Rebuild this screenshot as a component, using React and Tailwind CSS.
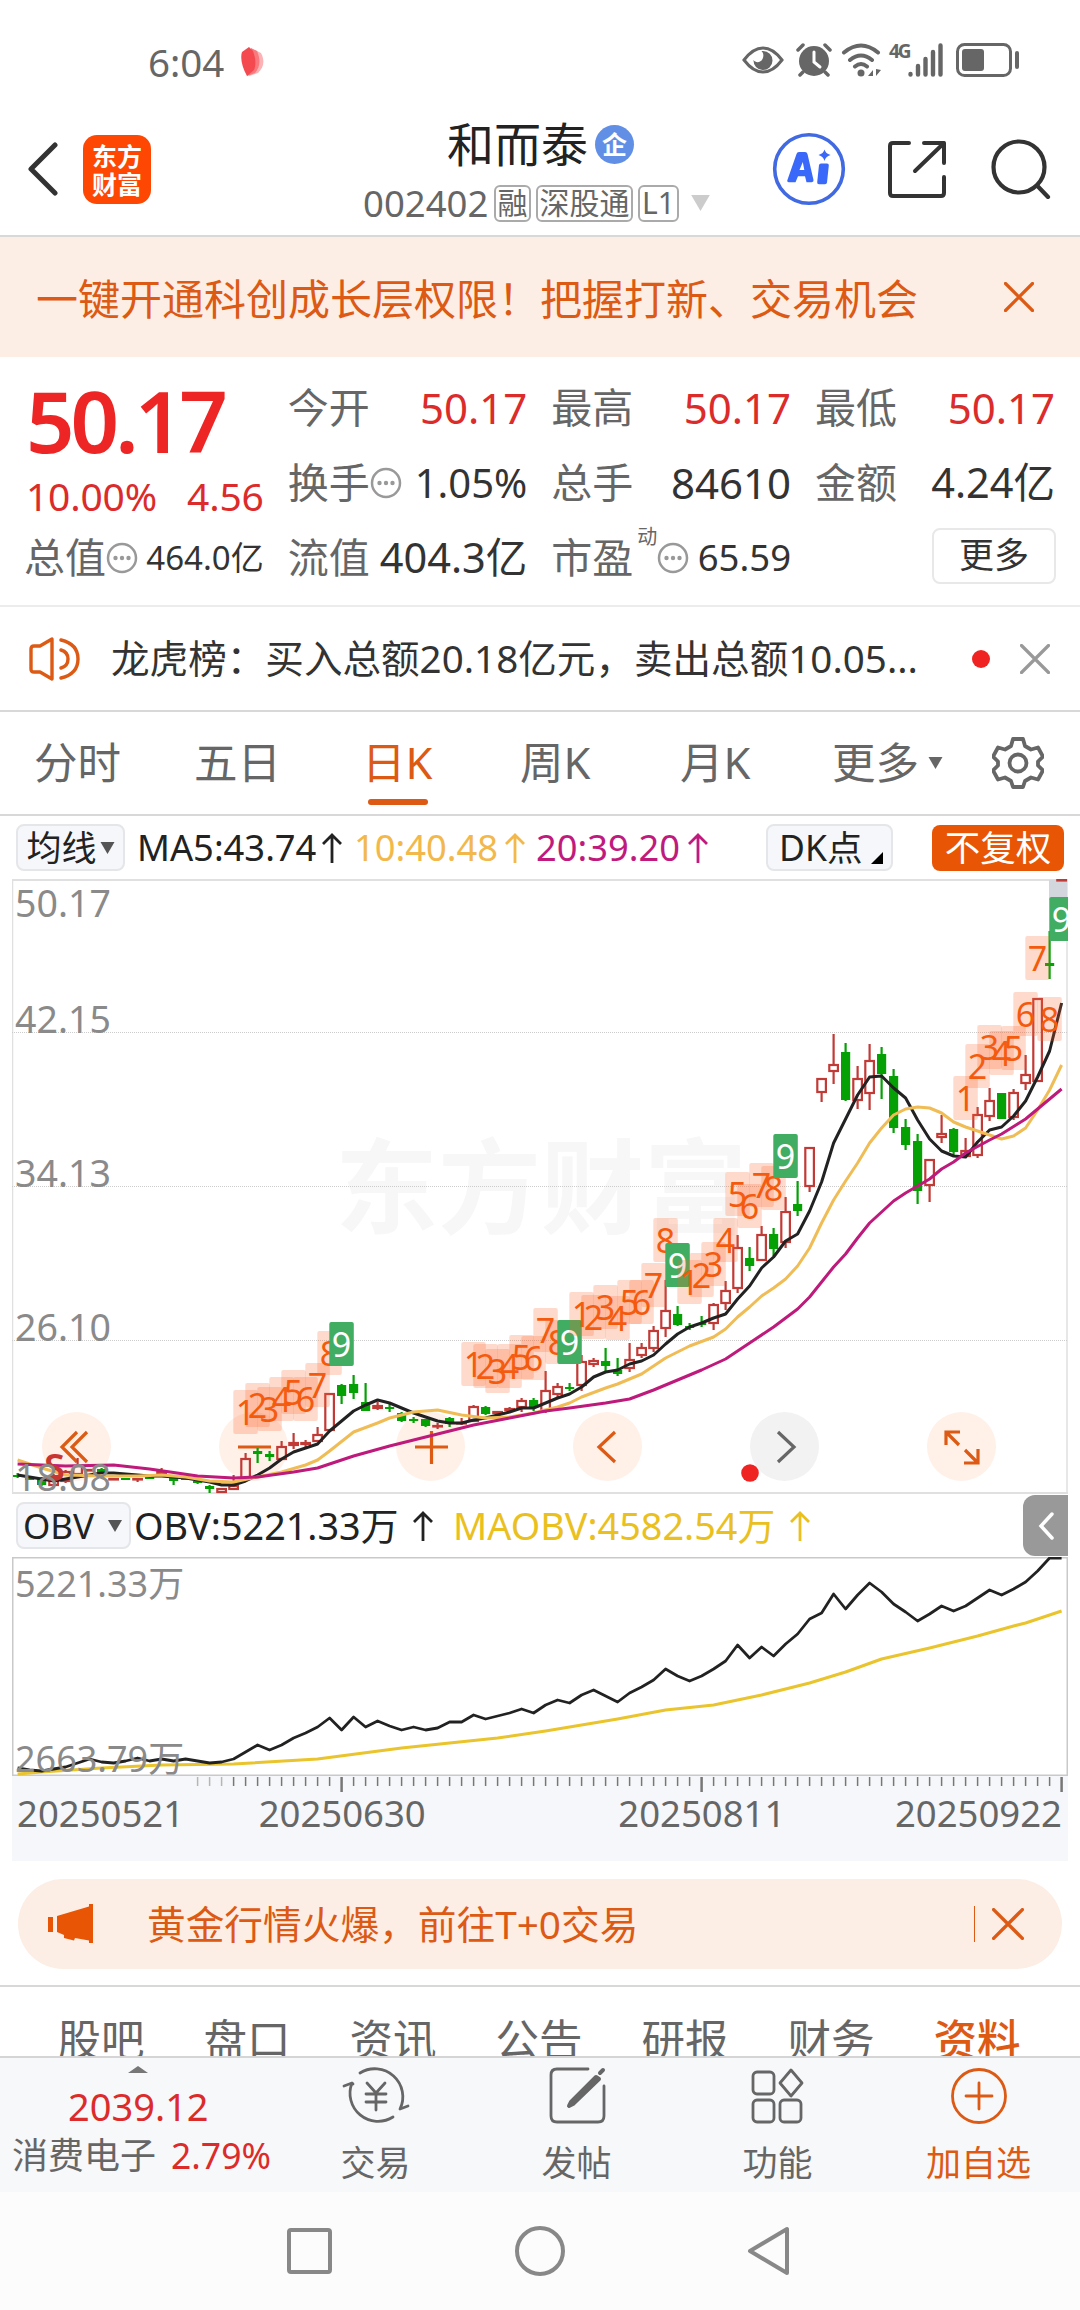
import React from 'react';

// One candle every 12px, first one at x = 17.6
const xAt = (i) => 17.6 + 12 * i;

// [direction, body top, body bottom, high, low]
const candles = [
  ['d', 1475, 1477, 1473, 1478], ['d', 1478, 1480, 1478, 1480], ['d', 1478, 1485, 1477, 1486], ['u', 1475, 1486, 1474, 1488],
  ['u', 1471, 1482, 1470, 1483], ['u', 1465, 1475, 1458, 1475], ['u', 1469, 1471, 1469, 1471], ['d', 1469, 1473, 1468, 1474],
  ['u', 1478, 1480, 1478, 1480], ['d', 1478, 1480, 1478, 1480], ['u', 1478, 1480, 1478, 1482], ['d', 1477, 1479, 1477, 1479],
  ['u', 1471, 1474, 1468, 1474], ['d', 1478, 1481, 1478, 1485], ['d', 1478, 1480, 1478, 1480], ['d', 1481, 1483, 1479, 1484],
  ['d', 1486, 1489, 1485, 1493], ['u', 1488, 1493, 1488, 1493], ['u', 1485, 1490, 1475, 1490], ['u', 1458, 1480, 1453, 1480],
  ['d', 1451, 1454, 1448, 1463], ['d', 1454, 1457, 1451, 1461], ['u', 1446, 1460, 1441, 1460], ['u', 1442, 1446, 1433, 1449],
  ['u', 1442, 1445, 1440, 1447], ['u', 1434, 1442, 1427, 1442], ['u', 1393, 1431, 1393, 1431], ['d', 1385, 1396, 1384, 1404],
  ['d', 1384, 1393, 1375, 1399], ['d', 1402, 1411, 1383, 1411], ['u', 1405, 1409, 1402, 1410], ['d', 1407, 1409, 1404, 1412],
  ['d', 1413, 1421, 1412, 1422], ['d', 1419, 1421, 1417, 1423], ['d', 1419, 1426, 1419, 1427], ['u', 1425, 1427, 1423, 1429],
  ['d', 1418, 1424, 1417, 1427], ['u', 1422, 1424, 1418, 1425], ['u', 1406, 1422, 1405, 1422], ['d', 1407, 1414, 1406, 1415],
  ['u', 1411, 1414, 1411, 1414], ['u', 1408, 1411, 1407, 1411], ['u', 1400, 1408, 1398, 1412], ['d', 1400, 1408, 1398, 1411],
  ['u', 1390, 1411, 1371, 1413], ['u', 1386, 1395, 1383, 1397], ['d', 1387, 1389, 1383, 1391], ['u', 1361, 1386, 1355, 1391],
  ['u', 1360, 1365, 1358, 1367], ['d', 1361, 1366, 1348, 1371], ['d', 1370, 1374, 1358, 1376], ['u', 1359, 1369, 1343, 1372],
  ['u', 1347, 1356, 1343, 1358], ['u', 1330, 1349, 1326, 1352], ['u', 1310, 1329, 1280, 1337], ['d', 1314, 1325, 1306, 1326],
  ['d', 1326, 1328, 1323, 1330], ['d', 1323, 1325, 1316, 1327], ['u', 1304, 1324, 1303, 1330], ['u', 1290, 1304, 1281, 1310],
  ['u', 1247, 1289, 1235, 1293], ['d', 1258, 1266, 1247, 1271], ['u', 1234, 1261, 1226, 1261], ['d', 1234, 1249, 1228, 1256],
  ['u', 1211, 1243, 1197, 1248], ['d', 1204, 1211, 1181, 1216], ['u', 1147, 1187, 1147, 1192], ['u', 1078, 1093, 1078, 1102],
  ['u', 1064, 1072, 1034, 1084], ['d', 1052, 1100, 1043, 1101], ['u', 1078, 1101, 1066, 1109], ['u', 1060, 1094, 1044, 1110],
  ['d', 1054, 1074, 1047, 1099], ['d', 1076, 1128, 1069, 1133], ['d', 1127, 1145, 1119, 1150], ['d', 1141, 1191, 1134, 1204],
  ['u', 1159, 1186, 1159, 1202], ['u', 1133, 1138, 1115, 1143], ['d', 1129, 1152, 1128, 1155], ['u', 1150, 1157, 1138, 1157],
  ['u', 1114, 1156, 1107, 1158], ['u', 1100, 1117, 1088, 1121], ['d', 1093, 1119, 1093, 1119], ['u', 1092, 1118, 1089, 1120],
  ['u', 1074, 1084, 1055, 1090], ['u', 998, 1082, 998, 1082], ['d', 963, 966, 931, 979], ['u', 879, 880, 879, 880],
];

const ma5 = [
  1475, 1477, 1479, 1481, 1479, 1477, 1475, 1473, 1473, 1474, 1475, 1476, 1476, 1477, 1478, 1480, 1482, 1485, 1485, 1481,
  1475, 1468, 1459, 1452, 1448, 1444, 1431, 1421, 1411, 1405, 1400, 1403, 1408, 1413, 1417, 1421, 1423, 1423, 1420, 1418,
  1415, 1412, 1408, 1408, 1403, 1398, 1394, 1387, 1377, 1372, 1370, 1364, 1361, 1355, 1344, 1334, 1327, 1323, 1318, 1314,
  1299, 1286, 1268, 1257, 1241, 1234, 1211, 1182, 1143, 1119, 1095, 1077, 1076, 1088, 1098, 1120, 1139, 1151, 1156, 1157,
  1142, 1130, 1127, 1116, 1101, 1077, 1051, 1003,
].map((y, i) => [i, y]);

const ma10 = [
  [0, 1460], [2, 1468], [4, 1475], [7, 1476], [10, 1476], [12, 1475], [14, 1477], [16, 1481], [18, 1482], [20, 1477],
  [22, 1472], [24, 1465], [25, 1460], [26, 1451], [28, 1432], [30, 1423], [31, 1418], [33, 1412], [35, 1410], [37, 1415],
  [39, 1418], [41, 1417], [43, 1413], [45, 1407], [46, 1403], [47, 1397], [49, 1388], [50, 1384], [52, 1374], [54, 1358],
  [56, 1346], [58, 1337], [59, 1329], [60, 1317], [61, 1307], [62, 1296], [63, 1288], [64, 1279], [65, 1266], [66, 1248],
  [67, 1223], [68, 1200], [69, 1181], [70, 1163], [71, 1143], [72, 1128], [73, 1115], [74, 1109], [75, 1107], [76, 1108],
  [77, 1113], [78, 1122], [79, 1127], [80, 1131], [81, 1135], [82, 1139], [83, 1136], [84, 1128], [85, 1110], [86, 1090], [87, 1065],
];

const ma20 = [
  [0, 1464], [4, 1466], [8, 1465], [11, 1469], [15, 1476], [18, 1478], [20, 1477], [23, 1472], [25, 1468], [28, 1456],
  [31, 1446], [34, 1437], [38, 1425], [41, 1418], [44, 1411], [46, 1408], [49, 1403], [51, 1399], [53, 1390], [55, 1380],
  [57, 1370], [59, 1359], [61, 1343], [63, 1327], [65, 1309], [66, 1297], [67, 1282], [68, 1267], [69, 1254], [70, 1238],
  [71, 1223], [72, 1212], [73, 1201], [74, 1193], [76, 1179], [77, 1169], [78, 1162], [79, 1153], [81, 1140], [82, 1134],
  [84, 1119], [87, 1089],
];

// Nine-turn markers: [first candle index, tops of boxes 1..9]
const turns = [
  [19, [1390, 1383, 1387, 1377, 1370, 1377, 1363, 1331, 1322]],
  [38, [1342, 1344, 1349, 1344, 1335, 1336, 1308, 1320, 1320]],
  [47, [1292, 1295, 1285, 1296, 1280, 1280, 1263, 1218, 1243]],
  [56, [1260, 1253, 1242, 1218, 1172, 1184, 1163, 1166, 1134]],
  [79, [1076, 1044, 1025, 1031, 1026, 992, 936, 997, 897]],
];

const obv = [
  1768, 1770, 1771, 1769, 1767, 1763, 1759, 1762, 1763, 1761, 1758, 1761, 1759, 1761, 1759, 1761, 1763, 1762, 1759, 1752,
  1745, 1750, 1745, 1738, 1733, 1727, 1718, 1730, 1717, 1727, 1721, 1726, 1730, 1727, 1730, 1728, 1722, 1722, 1715, 1719,
  1716, 1713, 1709, 1713, 1705, 1700, 1703, 1695, 1690, 1696, 1702, 1693, 1687, 1680, 1669, 1676, 1681, 1676, 1669, 1661,
  1645, 1658, 1647, 1656, 1644, 1634, 1619, 1613, 1594, 1609, 1595, 1583, 1592, 1604, 1612, 1621, 1614, 1606, 1611, 1606,
  1598, 1590, 1595, 1589, 1582, 1571, 1558, 1558,
].map((y, i) => [i, y]);

const maObv = [
  [0, 1774], [2, 1772], [7, 1768], [12, 1765], [18, 1764], [25, 1759], [32, 1748], [36, 1743], [40, 1738], [44, 1731],
  [50, 1719], [54, 1710], [58, 1705], [62, 1695], [66, 1683], [69, 1672], [72, 1659], [76, 1648], [80, 1636], [83, 1626],
  [84, 1623], [87, 1611],
];

const Line = ({ points, color, width = 3 }) => (
  <polyline
    points={points.map(([i, y]) => `${xAt(i)},${y}`).join(' ')}
    fill="none"
    stroke={color}
    strokeWidth={width}
    strokeLinejoin="round"
  />
);

const Cross = ({ className }) => (
  <svg viewBox="0 0 30 30" className={className} fill="none" stroke="currentColor" strokeWidth="3.200" strokeLinecap="round">
    <path d="M1.500 1.500l27 27M28.500 1.500l-27 27" />
  </svg>
);

const Caret = ({ className }) => (
  <svg viewBox="0 0 14 12" className={className} fill="currentColor">
    <path d="M0 0h14L7 12z" />
  </svg>
);

const UpArrow = ({ className }) => (
  <svg viewBox="0 0 22 30" className={`w-[22px] h-[30px] shrink-0 ${className}`} fill="none" stroke="currentColor" strokeWidth="2.8">
    <path d="M11 30V2M2 11l9-9 9 9" />
  </svg>
);

const Dots = () => (
  <svg viewBox="0 0 32 32" className="w-8 h-8 shrink-0 -mt-1 text-[#999]" fill="none" stroke="currentColor">
    <circle cx="16" cy="16" r="14" strokeWidth="2.500" />
    <g fill="currentColor" stroke="none">
      <circle cx="9.500" cy="16" r="2.200" />
      <circle cx="16" cy="16" r="2.200" />
      <circle cx="22.500" cy="16" r="2.200" />
    </g>
  </svg>
);

const StatusBar = () => (
  <div className="h-[114px] flex items-center pt-[10px] pl-[148px] pr-[60px] text-[#666]">
    <span className="text-[38.500px] leading-none">6:04</span>
    <svg viewBox="0 0 24 30" className="w-6 h-[30px] ml-[17px]">
      <path d="M14 3l6 3c4 8 3 14-3 20l-9 3z" fill="#fbb3b5" />
      <path d="M10 1l6 3c4 9 3 16-2 22l-8 3z" fill="#f87a7e" />
      <path d="M8 0l4 4c3 8 3 14 1 19l-7 6C1 20-1 11 1 5z" fill="#f4494f" />
    </svg>
    <div className="flex items-center ml-auto -mt-1">
      <svg viewBox="0 0 42 28" className="w-[42px] h-7" fill="none" stroke="currentColor" strokeWidth="3">
        <path d="M2 14C8 6 14 2 21 2s13 4 19 12c-6 8-12 12-19 12S8 22 2 14z" />
        <path d="M21 5a9.500 9.500 0 1 1-9.500 9c2 3 7 3 9-1 1.500-3 1-6-1-8z" fill="currentColor" stroke="none" />
      </svg>
      <svg viewBox="0 0 36 34" className="w-9 h-[34px] ml-3" fill="none" stroke="currentColor" strokeWidth="3.500" strokeLinecap="round">
        <circle cx="18" cy="18" r="15" fill="currentColor" stroke="none" />
        <path d="M2 7l5-5M34 7l-5-5M7 29l-3 3M29 29l3 3" />
        <path d="M18 9v10l6 5" stroke="white" strokeWidth="3" />
      </svg>
      <svg viewBox="0 0 42 34" className="w-[42px] h-[34px] ml-[9px]" fill="none" stroke="currentColor" strokeWidth="4" strokeLinecap="round">
        <path d="M3 9.500q17-14 34 0M9 17q11-9 22 0M14 23.500q6-5 12 0" />
        <circle cx="20" cy="30" r="3.500" fill="currentColor" stroke="none" />
        <path d="M32 27v6h-5zM35 26v7l5-6z" fill="currentColor" stroke="none" />
      </svg>
      <span className="self-start w-[19px] text-[19px] leading-[16px] font-bold ml-[6px] tracking-[-2px]">4G</span>
      <svg viewBox="0 0 36 34" className="w-9 h-[34px]" stroke="currentColor" strokeWidth="4.400" strokeLinecap="round">
        <path d="M2.500 31v.5M10 23v8.500M17.500 16v15.500M25 9v22.500M32.500 2.500v29" />
      </svg>
      <svg viewBox="0 0 64 34" className="w-16 h-[34px] ml-[12px]" fill="none" stroke="currentColor" strokeWidth="3">
        <rect x="1.500" y="1.500" width="53" height="31" rx="7" />
        <rect x="6" y="6" width="22" height="22" rx="3" fill="currentColor" stroke="none" />
        <path d="M61 10v14" strokeWidth="4" strokeLinecap="round" />
      </svg>
    </div>
  </div>
);

const Header = () => (
  <header className="h-[123px] border-b-2 border-[#d8d8d8] flex items-start">
    <svg viewBox="0 0 30 54" className="w-[30px] h-[54px] ml-7 mt-7" fill="none" stroke="#333" strokeWidth="5" strokeLinecap="round" strokeLinejoin="round">
      <path d="M27 3L3 27l24 24" />
    </svg>
    <div className="w-[68px] h-[69px] ml-[25px] mt-[21px] rounded-[14px] bg-[#fd4703] text-white text-[25px] leading-[28px] font-bold flex items-center justify-center text-center">
      东方<br />财富
    </div>
    <div className="w-[350px] ml-[212px] shrink-0">
      <div className="flex items-center h-[50px] mt-[5px] pl-[84px]">
        <span className="text-[47px] leading-none text-[#222]">和而泰</span>
        <span className="w-[39px] h-[39px] ml-[7px] rounded-full bg-[#628fe6] text-white text-[25px] leading-none font-bold flex items-center justify-center">企</span>
      </div>
      <div className="flex items-center h-[38px] mt-[15px] text-[#666]">
        <span className="w-[124px] text-[36.500px] leading-none">002402</span>
        <span className="w-[37px] h-[37px] ml-[7px] rounded-md border-2 border-[#aaa] text-[30px] leading-none flex items-center justify-center">融</span>
        <span className="w-[97px] h-[37px] ml-[5px] rounded-md border-2 border-[#aaa] text-[30px] leading-none flex items-center justify-center">深股通</span>
        <span className="w-[41px] h-[37px] ml-[5px] rounded-md border-2 border-[#aaa] text-[30px] leading-none flex items-center justify-center">L1</span>
        <Caret className="w-[23px] h-4 ml-[10px] text-[#ccc]" />
      </div>
    </div>
    <svg viewBox="0 0 74 74" className="w-[74px] h-[74px] ml-[59px] mt-[18px]">
      <circle cx="37" cy="37" r="34.300" fill="none" stroke="#4169e1" strokeWidth="3.600" />
      <path fillRule="evenodd" fill="#3a69fa" d="M24.500 22q.5-2 2.500-2h6q2 0 2.500 2l6 26q.3 2-1.700 2.200h-5.300l-1.500-6h-7l-2.500 6h-6.500q-2.500-.2-1.500-2.500zM27.500 38h4.800l-1.500-8z" />
      <path fill="#3a69fa" d="M47 33q.3-1.500 2-1.500h6q2 0 1.800 2l-1.800 17q-.3 1.800-2 1.800h-6q-2 0-1.800-2zM52.500 17.500q1 4 6 5.500-5 1.500-6 6-1-4.500-6-6 5-1.500 6-5.500z" />
    </svg>
    <svg viewBox="0 0 60 60" className="w-[60px] h-[60px] ml-[41px] mt-[26px]" fill="none" stroke="#333" strokeWidth="4" strokeLinecap="round" strokeLinejoin="round">
      <path d="M22 3H6Q3 3 3 6v47q0 3 3 3h48q3 0 3-3V37M37 3h20v20M57 3L28 31" />
    </svg>
    <svg viewBox="0 0 60 60" className="w-[60px] h-[60px] ml-[44px] mt-[25px] shrink-0" fill="none" stroke="#333" strokeWidth="4.200" strokeLinecap="round">
      <circle cx="28" cy="28" r="25.500" />
      <path d="M46.500 47L57 58" />
    </svg>
  </header>
);

const Banner = () => (
  <div className="h-[120px] bg-[#fceee5] flex items-center pl-9 pr-[46px] text-[#dc5a14]">
    <span className="mt-[3px] text-[42px] leading-none whitespace-nowrap">一键开通科创成长层权限！把握打新、交易机会</span>
    <Cross className="w-[30px] h-[30px] ml-auto" />
  </div>
);

const Cell = ({ label, value, red, children, size = 'text-[42px]' }) => (
  <div className="h-[75px] flex items-center whitespace-nowrap leading-none">
    <span className="text-[41px] -ml-[2px] -mt-1 text-[#666]">{label}</span>
    {children}
    <span className={`ml-auto -mt-1 ${size} ${red ? 'text-[#dc2b2b]' : 'text-[#333]'}`}>{value}</span>
  </div>
);

const Quote = () => (
  <section className="h-[250px] border-b-2 border-[#ececec] flex gap-[26px] pl-[26px] pr-[25px] pt-[15px]">
    <div className="w-[238px] text-[#dc2b2b] leading-none whitespace-nowrap">
      <div className="h-[96px] flex items-center text-[85px] tracking-[-4px] font-semibold text-[#ee2525]">50.17</div>
      <div className="h-[54px] flex items-center justify-between text-[39px] tracking-[-0.200px]">
        <span>10.00%</span>
        <span>4.56</span>
      </div>
      <Cell label="总值" value="464.0亿" size="text-[33px]"><Dots /></Cell>
    </div>
    <div className="w-[238px]">
      <Cell label="今开" value="50.17" red />
      <Cell label="换手" value="1.05%" size="text-[40px]"><Dots /></Cell>
      <Cell label="流值" value="404.3亿" size="text-[41.500px]" />
    </div>
    <div className="w-[238px]">
      <Cell label="最高" value="50.17" red />
      <Cell label="总手" value="84610" />
      <Cell label="市盈" value="65.59" size="text-[36.500px]">
        <span className="self-start mt-[5px] ml-1 text-[20px] text-[#666]">动</span>
        <Dots />
      </Cell>
    </div>
    <div className="w-[238px]">
      <Cell label="最低" value="50.17" red />
      <Cell label="金额" value="4.24亿" size="text-[41.500px]" />
      <button className="w-[124px] h-[56px] mt-[6px] ml-[115px] rounded-lg border-2 border-[#e8e8e8] text-[35px] leading-none text-[#333] flex items-center justify-center pb-1">
        更多
      </button>
    </div>
  </section>
);

const News = () => (
  <div className="h-[105px] border-b-2 border-[#d8d8d8] flex items-center pl-[29px] pr-[30px]">
    <svg viewBox="0 0 52 44" className="w-[52px] h-11 text-[#dc5a14]" fill="none" stroke="currentColor" strokeWidth="3.400" strokeLinejoin="round" strokeLinecap="round">
      <path d="M2 12q0-3 3-3h6L23 2v40L11 35H5q-3 0-3-3zM32 3q17 4 17 19T32 41M32 13q7 2 7 9t-7 9" />
    </svg>
    <span className="ml-[30px] text-[38.600px] leading-none text-[#333] whitespace-nowrap">龙虎榜：买入总额20.18亿元，卖出总额10.05...</span>
    <span className="w-[18px] h-[18px] ml-auto mr-[30px] rounded-full bg-[#f02323]" />
    <Cross className="w-[30px] h-[30px] text-[#999]" />
  </div>
);

const PeriodTabs = () => (
  <nav className="h-[104px] border-b-2 border-[#d8d8d8] grid grid-cols-[160px_168px_158px_160px_152px_1fr] items-center pl-[34px] text-[43.500px] leading-none text-[#666]">
    <span>分时</span>
    <span>五日</span>
    <span className="relative text-[#dc5a14]">
      日K
      <i className="absolute left-[6px] top-[58px] w-[60px] h-[6px] rounded-full bg-[#dc5a14]" />
    </span>
    <span>周K</span>
    <span>月K</span>
    <div className="flex items-center">
      更多
      <Caret className="w-[15px] h-3 ml-[9px]" />
      <svg viewBox="0 0 52 52" className="w-[52px] h-[52px] ml-[49px]" fill="none" stroke="currentColor" strokeWidth="3.800" strokeLinejoin="round">
        <path d="M21 2h10l2 7 6 3.500 7-2 5 9-5 5v4l5 5-5 9-7-2-6 3.500-2 6H21l-2-6-6-3.500-7 2-5-9 5-5v-4l-5-5 5-9 7 2L19 9z" />
        <circle cx="26" cy="26" r="8.500" />
      </svg>
    </div>
  </nav>
);

const MaBar = () => (
  <div className="h-[63px] flex items-center pl-4 text-[36.300px] leading-none whitespace-nowrap text-[#222]">
    <button className="w-[109px] h-[47px] rounded-lg border-2 border-[#e4e6e9] bg-[#f6f7fa] flex items-center justify-center text-[35px]">
      均线
      <Caret className="w-[15px] h-3 ml-[3px] text-[#555]" />
    </button>
    <span className="w-[184px] ml-3">MA5:43.74</span>
    <UpArrow />
    <span className="w-[150px] ml-[11px] text-[#f2b84b]">10:40.48</span>
    <UpArrow className="text-[#f2b84b]" />
    <span className="w-[151px] ml-[10px] text-[#c01a7e]">20:39.20</span>
    <UpArrow className="text-[#c01a7e]" />
    <button className="w-[127px] h-[47px] ml-[57px] rounded-lg border-2 border-[#e4e6e9] bg-[#f6f7fa] flex items-center pl-[11px] text-[35.500px]">
      DK点
      <svg viewBox="0 0 12 12" className="w-3 h-3 ml-[9px] mt-5"><path d="M12 0v12H0z" /></svg>
    </button>
    <button className="w-[132px] h-[46px] ml-[39px] rounded-lg bg-[#e85505] text-white text-[35.500px] flex items-center justify-center">不复权</button>
  </div>
);

const TurnMarks = () =>
  turns.map(([start, tops]) =>
    tops.map((top, n) => {
      const x = xAt(start + n);
      const last = n === 8;
      return (
        <g key={`${start}-${n}`}>
          <rect x={x - 12.3} y={top} width="24.500" height="44" rx="2" fill={last ? '#40ad62' : '#fa6428'} fillOpacity={last ? 1 : 0.24} />
          <text x={x} y={top + 35} textAnchor="middle" fontSize="34" fill={last ? '#fff' : '#f45a0c'}>{n + 1}</text>
        </g>
      );
    })
  );

const controls = [
  { icon: 'M19 4L4 19l15 15M29 4L14 19l15 15', tone: 'bg-[#ff6a1a]/10 text-[#dc5a14]' },
  { icon: 'M3 19h33', tone: 'bg-[#ff6a1a]/10 text-[#dc5a14]' },
  { icon: 'M3 19h33M19.500 3v33', tone: 'bg-[#ff6a1a]/10 text-[#dc5a14]' },
  { icon: 'M26 4L10 19l16 15', tone: 'bg-[#ff6a1a]/10 text-[#dc5a14]' },
  { icon: 'M12 4l16 15-16 15', tone: 'bg-[#f2f2f2] text-[#666]' },
  { icon: 'M3 17V4h14M4 5l12 12M22 22l12 12M35 21v14H21', tone: 'bg-[#ff6a1a]/10 text-[#dc5a14]' },
];

const KChart = () => (
  <div className="relative w-[1056px] h-[615px] ml-3">
    <div className="absolute left-[323px] top-[256px] text-[103px] leading-none font-bold text-[#f7f7f7]">东方财富</div>
    <div className="absolute left-[30px] top-[533px] flex gap-[108px]">
      {controls.map((c, i) => (
        <div key={i} className={`w-[69px] h-[69px] rounded-full flex items-center justify-center ${c.tone}`}>
          <svg viewBox="0 0 38 38" className="w-[38px] h-[38px]" fill="none" stroke="currentColor" strokeWidth="3.200">
            <path d={c.icon} />
          </svg>
        </div>
      ))}
    </div>
    <svg viewBox="12 879 1056 615" className="relative w-full h-full">
      <path d="M12 880H1068M12 1493H1068" stroke="#e0e0e0" strokeWidth="2" />
      <path d="M12.500 879V1494M1067 879V1494" stroke="#e0e0e0" strokeWidth="1.500" />
      <path d="M12 1032.500H1068M12 1186.500H1068M12 1340.500H1068" stroke="#ccc" strokeDasharray="1 1" />
      <rect x="1049" y="880" width="18" height="20" fill="#d3d6dc" />
      {candles.map(([dir, top, bottom, high, low], i) => {
        const x = xAt(i);
        const color = dir === 'u' ? '#c23a36' : '#04a004';
        return (
          <g key={i} stroke={color} strokeWidth="2.200">
            <path d={`M${x} ${high}V${top}M${x} ${bottom}V${low}`} />
            {dir === 'u' ? (
              <rect x={x - 4.3} y={top + 1} width="8.600" height={Math.max(bottom - top - 2, 0.5)} fill="none" />
            ) : (
              <rect x={x - 4.6} y={top} width="9.200" height={bottom - top} fill={color} stroke="none" />
            )}
          </g>
        );
      })}
      <Line points={ma5} color="#222" />
      <Line points={ma10} color="#f0bc55" />
      <Line points={ma20} color="#bd1a7b" />
      <TurnMarks />
      <text x="44" y="1481" fontSize="38" fontWeight="600" fill="#c8362f">S</text>
      <g fontSize="37.500" fill="#8a8a8a">
        <text x="15" y="917">50.17</text>
        <text x="15" y="1033">42.15</text>
        <text x="15" y="1187">34.13</text>
        <text x="15" y="1341">26.10</text>
        <text x="15" y="1491">18.08</text>
      </g>
      <circle cx="750" cy="1473" r="8.800" fill="#f02323" />
    </svg>
  </div>
);

const ObvBar = () => (
  <div className="h-[63px] flex items-center pl-4 pr-3 text-[37.800px] leading-none whitespace-nowrap text-[#222]">
    <button className="w-[115px] h-[47px] rounded-lg border-2 border-[#e4e6e9] bg-[#f6f7fa] flex items-center justify-between pl-[5px] pr-[7px] text-[35px]">
      OBV
      <Caret className="w-[14px] h-3 text-[#555]" />
    </button>
    <span className="ml-[3px] w-[278px]">OBV:5221.33万</span>
    <UpArrow />
    <span className="ml-[19px] w-[336px] text-[#eac01f]">MAOBV:4582.54万</span>
    <UpArrow className="text-[#eac01f]" />
    <div className="w-[45px] h-[61px] ml-auto rounded-l-xl bg-[#999] flex items-center justify-center">
      <svg viewBox="0 0 16 28" className="w-4 h-7" fill="none" stroke="white" strokeWidth="3.500" strokeLinecap="round">
        <path d="M14 2L3 14l11 12" />
      </svg>
    </div>
  </div>
);

const ObvChart = () => (
  <div className="ml-3 w-[1056px]">
    <svg viewBox="12 1557 1056 219" className="block w-full h-[219px]">
      <rect x="12.750" y="1557.750" width="1054.500" height="217.500" fill="none" stroke="#c9c9c9" strokeWidth="1.500" />
      <Line points={maObv} color="#eac42c" />
      <Line points={obv} color="#222" width={2.8} />
      <g fontSize="36" fill="#8a8a8a">
        <text x="15" y="1597">5221.33万</text>
        <text x="15" y="1772">2663.79万</text>
      </g>
    </svg>
    <div className="h-[85px] bg-[#f6f7fa]">
      <svg viewBox="12 1776 1056 18" className="block w-full h-[18px]" stroke="#777">
        {candles.map((_, i) => {
          if (i < 15) return null;
          const major = i % 30 === 27;
          return <path key={i} d={`M${xAt(i)} 1777v${major ? 15 : 9}`} strokeWidth={major ? 2.5 : 1.5} opacity={i < 18 ? 0.5 : 1} />;
        })}
      </svg>
      <div className="flex justify-between pl-[5px] pr-[6px] text-[36.500px] leading-none text-[#666] h-[38px] items-center">
        <span>20250521</span>
        <span>20250630</span>
        <span className="ml-[118px]">20250811</span>
        <span className="ml-[35px]">20250922</span>
      </div>
    </div>
  </div>
);

const GoldBanner = () => (
  <div className="px-[18px] pt-[18px] pb-4 border-b-2 border-[#d8d8d8]">
    <div className="h-[90px] rounded-full bg-[#fceee5] text-[#dc5a14] flex items-center pl-[30px] pr-[38px]">
      <svg viewBox="0 0 46 40" className="w-[46px] h-10" fill="#e85505">
        <path d="M0 13h5v15H0zM9 12L41 2.500V0h4v39h-4v-2.500L27 34l-1 2.500-10-2.500v-3L9 28z" />
      </svg>
      <span className="ml-[53px] text-[38.700px] leading-none whitespace-nowrap">黄金行情火爆，前往T+0交易</span>
      <i className="w-[1.500px] h-9 bg-[#dc5a14] ml-auto" />
      <Cross className="w-8 h-8 ml-[17px]" />
    </div>
  </div>
);

const sections = ['股吧', '盘口', '资讯', '公告', '研报', '财务', '资料'];

const SectionTabs = () => (
  <div className="h-[69px] overflow-hidden grid grid-cols-[repeat(7,146px)] pl-7 pt-[31px] text-[43.500px] leading-none text-center text-[#666]">
    {sections.map((name) => (
      <span key={name} className={name === '资料' ? 'text-[#dc5a14] font-medium' : ''}>{name}</span>
    ))}
  </div>
);

const Action = ({ label, className = '', children }) => (
  <div className={`w-[201px] flex flex-col items-center pt-[8px] ${className}`}>
    <svg viewBox="0 0 62 60" className="w-[62px] h-[60px] overflow-visible" fill="none" stroke="currentColor" strokeWidth="2.800" strokeLinecap="round" strokeLinejoin="round">
      {children}
    </svg>
    <span className="mt-[19px] text-[35px] leading-none">{label}</span>
  </div>
);

const ActionBar = () => (
  <div className="h-[136px] bg-[#f7f8fa] border-t-2 border-[#d5d5d5] flex text-[#666]">
    <div className="w-[275px] pl-3 leading-none whitespace-nowrap">
      <svg viewBox="0 0 20 7" className="w-5 h-[7px] ml-[116px] mt-2"><path d="M10 0l10 7H0z" fill="#777" /></svg>
      <div className="mt-[14px] pl-[56px] text-[38px] text-[#dc2b2b]">2039.12</div>
      <div className="flex items-center mt-[13px] text-[36px]">
        <span>消费电子</span>
        <span className="ml-[15px] text-[35.500px] text-[#dc2b2b]">2.79%</span>
      </div>
    </div>
    <Action label="交易">
      <path d="M15 7A28 28 0 0 1 55 43l8-3M48 51A28 28 0 0 1 7 17l-8 3M7 17l1 1" />
      <path d="M22 17l9 10 9-10M21 28h20M21 36h20M31 28v16" />
    </Action>
    <Action label="发帖">
      <path d="M42 3H11q-6 0-6 6v41q0 6 6 6h41q6 0 6-6V20" />
      <path d="M50 11L25 36l-2 4 4-2 26-25zM54 7l3-3" strokeWidth="4" />
    </Action>
    <Action label="功能">
      <rect x="6" y="6" width="21" height="22" rx="4" />
      <rect x="6" y="34" width="21" height="22" rx="4" />
      <rect x="33" y="34" width="21" height="22" rx="4" />
      <path d="M44 4l11 13-11 13-11-13z" />
    </Action>
    <Action label="加自选" className="text-[#dc5a14]">
      <circle cx="31" cy="30" r="26.500" />
      <path d="M31 17v26M18 30h26" />
    </Action>
  </div>
);

const SystemNav = () => (
  <div className="h-[118px] bg-[#fcfcfc]">
    <svg viewBox="0 0 1080 118" className="w-full h-full" fill="none" stroke="#888" strokeWidth="4" strokeLinejoin="round">
      <rect x="289" y="38" width="41" height="42" rx="2" />
      <circle cx="540" cy="59" r="23" />
      <path d="M787 37v44L750 59z" />
    </svg>
  </div>
);

export default function App() {
  return (
    <div className="w-[1080px] h-[2310px] overflow-hidden bg-white font-['Noto_Sans','Noto_Sans_CJK_SC',sans-serif]">
      <StatusBar />
      <Header />
      <Banner />
      <Quote />
      <News />
      <PeriodTabs />
      <MaBar />
      <KChart />
      <ObvBar />
      <ObvChart />
      <GoldBanner />
      <SectionTabs />
      <ActionBar />
      <SystemNav />
    </div>
  );
}
